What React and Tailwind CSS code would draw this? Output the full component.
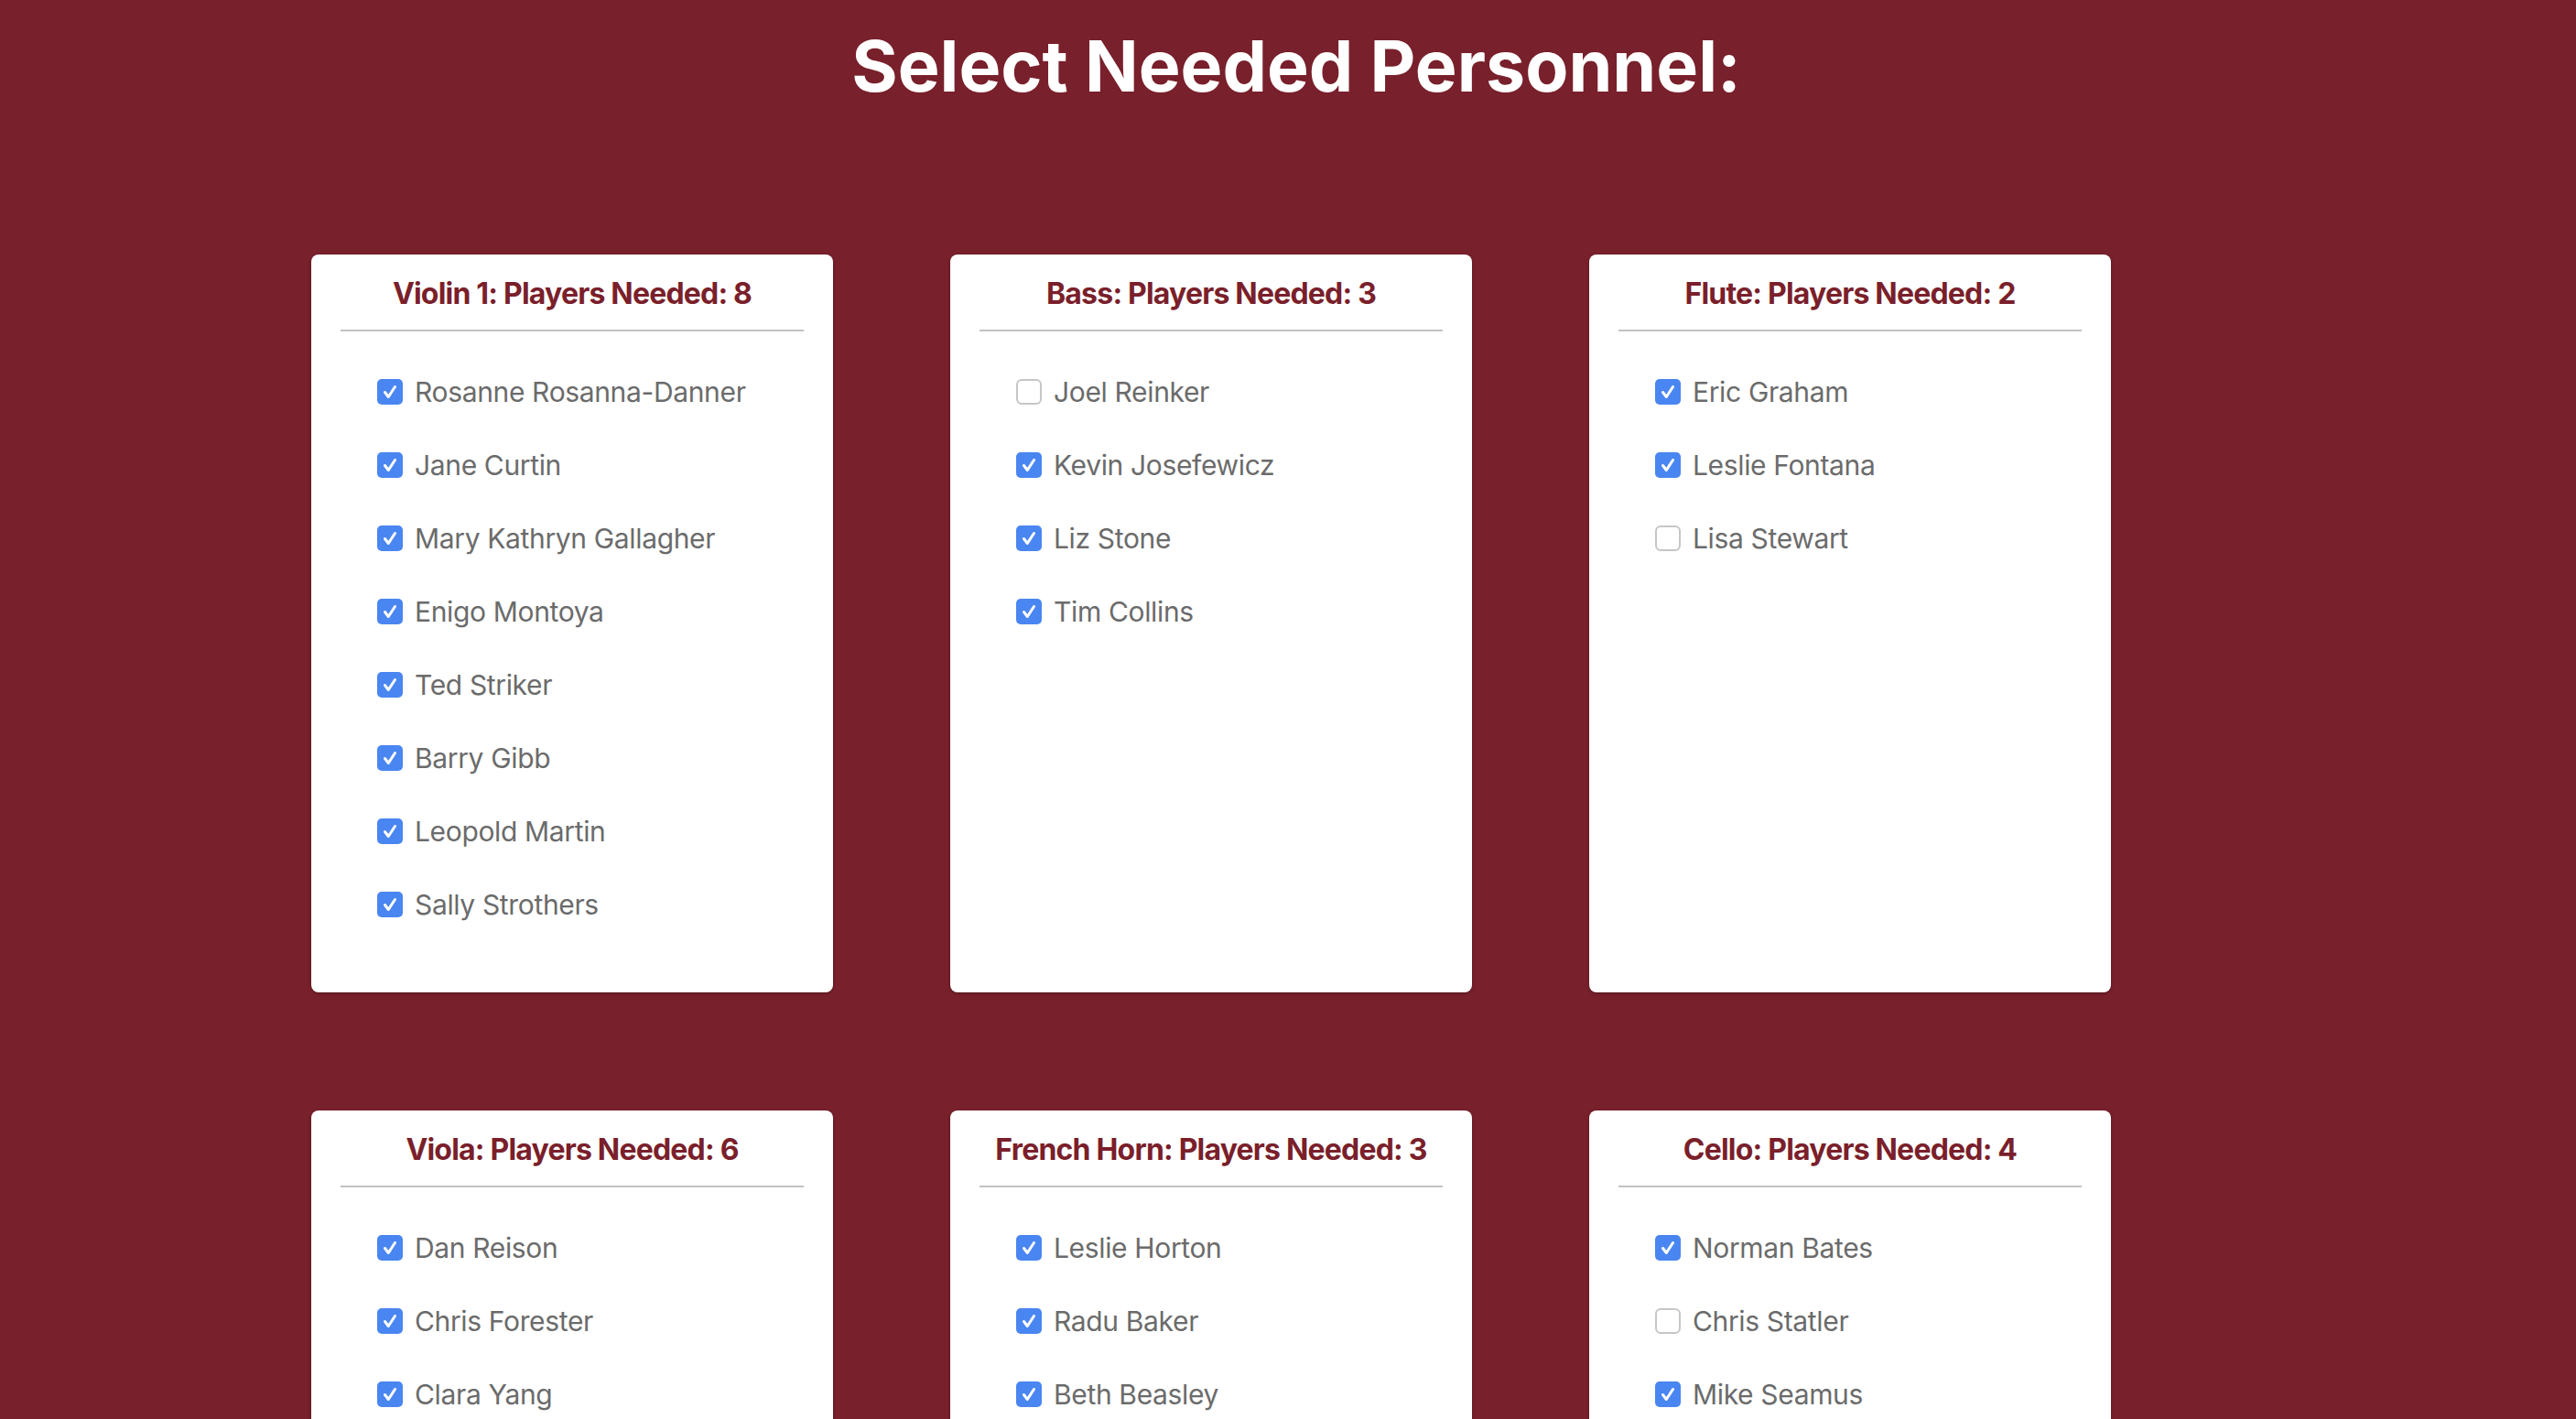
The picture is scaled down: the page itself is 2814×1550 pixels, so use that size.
import React from 'react';

const sections = [
    {
        name: 'Violin 1',
        needed: 8,
        players: [
            ['Rosanne Rosanna-Danner', true],
            ['Jane Curtin', true],
            ['Mary Kathryn Gallagher', true],
            ['Enigo Montoya', true],
            ['Ted Striker', true],
            ['Barry Gibb', true],
            ['Leopold Martin', true],
            ['Sally Strothers', true],
        ],
    },
    {
        name: 'Bass',
        needed: 3,
        players: [
            ['Joel Reinker', false],
            ['Kevin Josefewicz', true],
            ['Liz Stone', true],
            ['Tim Collins', true],
        ],
    },
    {
        name: 'Flute',
        needed: 2,
        players: [
            ['Eric Graham', true],
            ['Leslie Fontana', true],
            ['Lisa Stewart', false],
        ],
    },
    {
        name: 'Viola',
        needed: 6,
        players: [
            ['Dan Reison', true],
            ['Chris Forester', true],
            ['Clara Yang', true],
        ],
    },
    {
        name: 'French Horn',
        needed: 3,
        players: [
            ['Leslie Horton', true],
            ['Radu Baker', true],
            ['Beth Beasley', true],
        ],
    },
    {
        name: 'Cello',
        needed: 4,
        players: [
            ['Norman Bates', true],
            ['Chris Statler', false],
            ['Mike Seamus', true],
        ],
    },
];

const Box = ({ checked }) =>
    checked ? (
        <span className="w-[28px] h-[28px] rounded-[5px] bg-[#4a86f1] flex items-center justify-center shrink-0">
            <svg width="28" height="28" viewBox="0 0 28 28" fill="none">
                <path d="M8.5 14.5 L12.3 19.5 L19.5 8.5" stroke="white" strokeWidth="3" strokeLinecap="round" strokeLinejoin="round" />
            </svg>
        </span>
    ) : (
        <span className="w-[28px] h-[28px] rounded-[6px] bg-white border-2 border-[#c6c6c6] shrink-0"></span>
    );

const SectionCard = ({ section }) => (
    <div className="w-[570px] h-[806px] bg-white rounded-[8px] shadow-[0_1px_3px_rgba(0,0,0,0.35)] px-[32px]">
        <h2 className="pt-[27px] text-center text-[32px] leading-none font-bold tracking-[-0.8px] text-[#7a1f2b]">
            {section.name}: Players Needed: {section.needed}
        </h2>
        <div className="mt-[23px] h-[2px] bg-[#c2c2c2]"></div>
        <ul className="mt-[26px] pl-[40px]">
            {section.players.map(([name, checked]) => (
                <li key={name} className="h-[80px] flex items-center gap-[13px]">
                    <Box checked={checked} />
                    <span className="text-[30px] tracking-[-0.35px] text-[#6b6b6b]">{name}</span>
                </li>
            ))}
        </ul>
    </div>
);

export default function App() {
    return (
        <div className="min-h-screen bg-[#78202b] pb-[120px]" style={{ fontFamily: 'Inter, "Noto Sans", sans-serif' }}>
            <h1 className="pt-[34px] pl-[18px] text-center text-white font-bold text-[77px] leading-none">
                Select Needed Personnel:
            </h1>
            <div className="mt-[167px] pl-[340px] grid grid-cols-[repeat(3,570px)] gap-x-[128px] gap-y-[129px]">
                {sections.map((s) => (
                    <SectionCard key={s.name} section={s} />
                ))}
            </div>
        </div>
    );
}
